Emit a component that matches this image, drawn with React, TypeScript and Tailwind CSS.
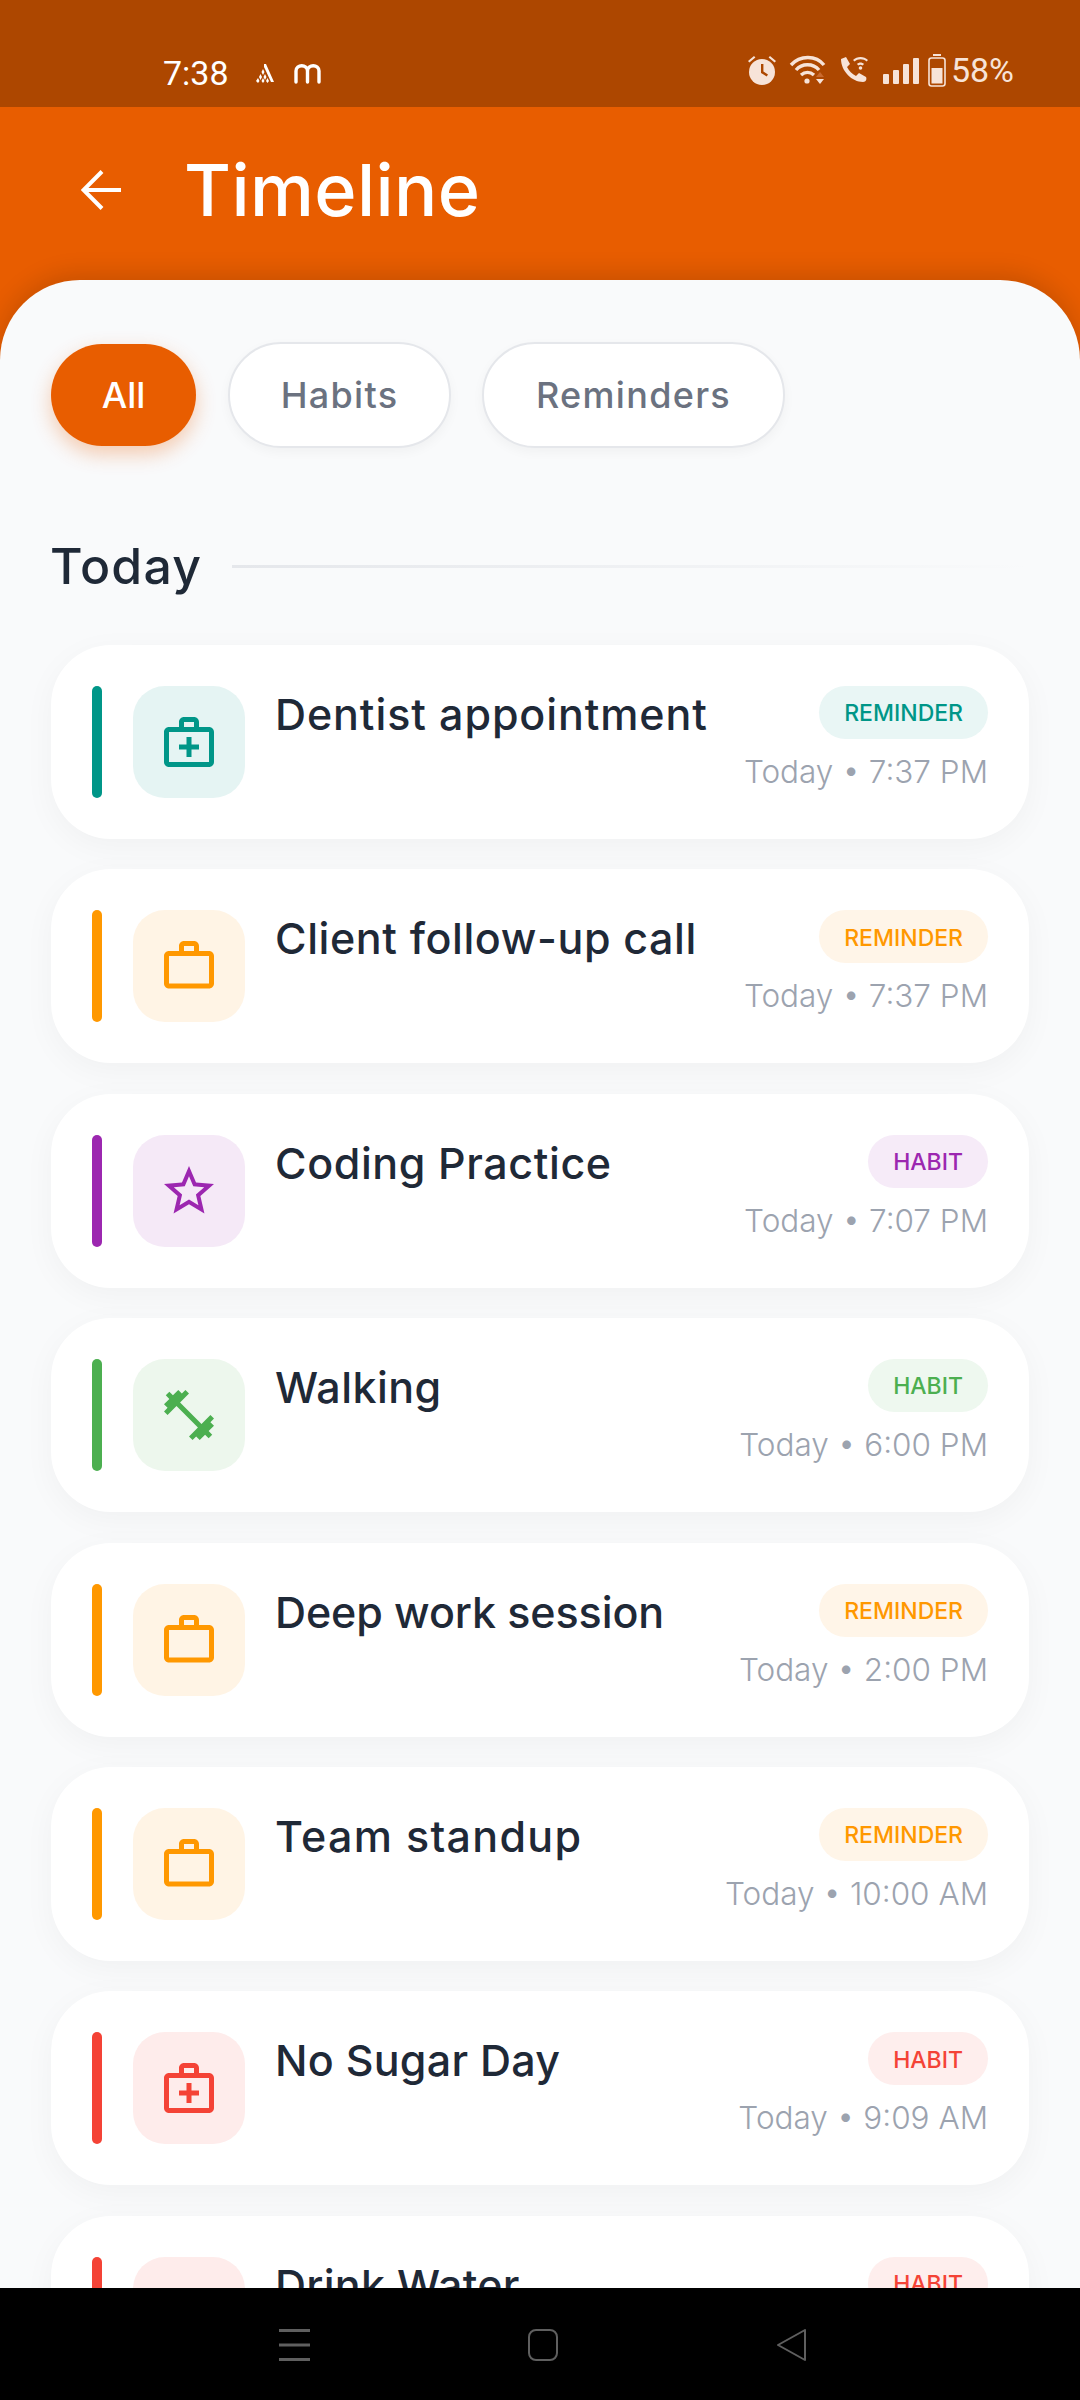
import { MdFitnessCenter, MdOutlineMedicalServices, MdStarBorder, MdWorkOutline } from 'react-icons/md'

const items = [
  { title: 'Dentist appointment', kind: 'REMINDER', time: 'Today • 7:37 PM', tone: 'teal', icon: 'med', track: 'tracking-[0.9px]' },
  { title: 'Client follow-up call', kind: 'REMINDER', time: 'Today • 7:37 PM', tone: 'orange', icon: 'work', track: 'tracking-[0.6px]' },
  { title: 'Coding Practice', kind: 'HABIT', time: 'Today • 7:07 PM', tone: 'purple', icon: 'star', track: 'tracking-[0.6px]' },
  { title: 'Walking', kind: 'HABIT', time: 'Today • 6:00 PM', tone: 'green', icon: 'fit', track: 'tracking-[0.45px]' },
  { title: 'Deep work session', kind: 'REMINDER', time: 'Today • 2:00 PM', tone: 'orange', icon: 'work', track: 'tracking-[-0.1px]' },
  { title: 'Team standup', kind: 'REMINDER', time: 'Today • 10:00 AM', tone: 'orange', icon: 'work', track: 'tracking-[1.3px]' },
  { title: 'No Sugar Day', kind: 'HABIT', time: 'Today • 9:09 AM', tone: 'red', icon: 'med', track: 'tracking-[0.25px]' },
  { title: 'Drink Water', kind: 'HABIT', time: 'Today • 8:00 AM', tone: 'red', icon: 'med', track: 'tracking-[0.25px]' },
]

const tones: Record<string, { bar: string; box: string; badge: string; text: string }> = {
  teal: { bar: 'bg-[#009688]', box: 'bg-[#e5f4f3]', badge: 'bg-[#e9f6f5]', text: 'text-[#009688]' },
  orange: { bar: 'bg-[#ff9800]', box: 'bg-[#fff4e5]', badge: 'bg-[#fff5e8]', text: 'text-[#ff9800]' },
  purple: { bar: 'bg-[#9c27b0]', box: 'bg-[#f5e9f7]', badge: 'bg-[#f6ebf8]', text: 'text-[#9c27b0]' },
  green: { bar: 'bg-[#4caf50]', box: 'bg-[#edf7ed]', badge: 'bg-[#eef8ef]', text: 'text-[#4caf50]' },
  red: { bar: 'bg-[#f44336]', box: 'bg-[#feeceb]', badge: 'bg-[#feeeed]', text: 'text-[#f44336]' },
}

function ItemIcon({ name }: { name: string }) {
  if (name === 'med') return <MdOutlineMedicalServices size={60} />
  if (name === 'work') return <MdWorkOutline size={60} />
  if (name === 'star') return <MdStarBorder size={60} />
  return <MdFitnessCenter size={60} />
}

function StatusIcons() {
  return (
    <div className="flex items-center text-[#f7e3d8]">
      <svg width="30" height="32" viewBox="0 0 30 32" fill="currentColor">
        <circle cx="15" cy="18" r="13" />
        <path d="M14 10h2.400v7.600l4.600 3-1.300 1.800L14 19z" fill="#ad4700" />
        <path d="M1 7l6-5 1.400 1.600-6 5zM29 7l-6-5-1.400 1.600 6 5z" />
      </svg>
      <svg className="ml-[12px]" width="38" height="30" viewBox="0 0 38 30" fill="none" stroke="currentColor" strokeWidth="3.400">
        <path d="M2 10C11 0 27 0 35 10" />
        <path d="M7 15c6-7 17-7 23 0" />
        <path d="M12 20c4-3.500 9-3.500 13 0" />
        <circle cx="18" cy="26" r="2.600" fill="currentColor" stroke="none" />
        <path d="M31 17l4 5h-8z" fill="#c96a2e" stroke="none" />
        <path d="M27 24h8l-4 5z" fill="currentColor" stroke="none" />
      </svg>
      <svg className="ml-[12px]" width="30" height="30" viewBox="0 0 30 30" fill="currentColor">
        <path d="M2 4l5-2 4 7-3 3c2 4 5 7 9 9l3-3 7 4c1 2 0 5-3 5C13 27 2 16 2 4z" />
        <path d="M14 5c4-4 11-4 15 0l-1.400 1.400c-3-3-9-3-12 0zM18 9c2-2 5-2 7 0l-1.400 1.400c-1.500-1-3-1-4.200 0z" />
        <circle cx="21.500" cy="13" r="1.800" />
      </svg>
      <div className="ml-[14px] flex items-end gap-[4px] h-[27px]">
        <div className="w-[6px] h-[10px] bg-current rounded-[1px]" />
        <div className="w-[6px] h-[14px] bg-current rounded-[1px]" />
        <div className="w-[6px] h-[20px] bg-current rounded-[1px]" />
        <div className="w-[6px] h-[26px] bg-current rounded-[1px]" />
      </div>
      <svg className="ml-[9px]" width="18" height="33" viewBox="0 0 18 33" fill="currentColor">
        <rect x="5" y="0" width="8" height="2" />
        <rect x="1" y="4" width="16" height="28" rx="2.500" fill="none" stroke="currentColor" strokeWidth="1.600" />
        <rect x="3.500" y="14" width="11" height="15.500" />
      </svg>
      <span className="ml-[5px] text-[34px] leading-none font-['Roboto',sans-serif]">58%</span>
    </div>
  )
}

export default function App() {
  return (
    <div className="h-[2400px] w-[1080px] flex flex-col overflow-hidden font-['Inter',sans-serif]">
      {/* Status bar */}
      <div className="h-[107px] bg-[#ad4700] flex items-start justify-between pt-[54px] pl-[163px] pr-[66px] shrink-0">
        <div className="flex items-center text-white">
          <span className="text-[34px] leading-[38px] font-['Roboto',sans-serif]">7:38</span>
          <svg className="ml-[26px]" width="20" height="20" viewBox="0 0 20 20" fill="currentColor">
            <path d="M9 1h2l8 18h-3L10 6 9 4z" />
            <path d="M8 6l1.500 3-1.500 3-1.500-3zM5.500 11l1.500 3-1.500 3-1.500-3zM10 11l1.500 3-1.500 3-1.500-3zM3 15l1.500 3-1.500 2-2-2zM8 15l1.500 3L8 20l-1.500-2zM12.500 15l1.500 3-1.500 2-1.500-2z" />
          </svg>
          <svg className="ml-[19px]" width="27" height="21" viewBox="0 0 27 21" fill="none" stroke="currentColor" strokeWidth="3.400" strokeLinecap="round">
            <path d="M2 19V8c0-7 11.500-7 11.500 0v11M13.500 8c0-7 11.500-7 11.500 0v11" />
          </svg>
        </div>
        <div className="-mt-[1px]">
          <StatusIcons />
        </div>
      </div>

      <div className="flex-1 flex flex-col bg-[#e85d00] min-h-0">
        {/* Header */}
        <div className="h-[173px] shrink-0 flex items-center pl-[81px] pb-[8px] text-white">
          <svg width="40" height="40" viewBox="0 0 40 40" fill="none" stroke="currentColor" strokeWidth="4">
            <path d="M40 20H3M21 1.500L2.500 20 21 38.500" />
          </svg>
          <h1 className="ml-[63px] text-[72px] leading-none font-medium tracking-[0.4px]">Timeline</h1>
        </div>

        {/* Sheet */}
        <div className="flex-1 min-h-0 overflow-hidden bg-[#f9fafb] rounded-t-[80px] shadow-[0_-6px_24px_rgba(0,0,0,0.14)] px-[51px] pt-[62px]">
          <div className="flex items-center">
            <button className="w-[145px] h-[102px] rounded-[51px] bg-[#e85d00] text-white text-[36px] font-medium shadow-[0_8px_20px_rgba(232,93,0,0.3)]">
              All
            </button>
            <button className="ml-[32px] w-[223px] h-[106px] rounded-[53px] bg-white border-2 border-[#e5e7eb] text-[#6b7280] text-[36px] font-medium tracking-[1.3px] shadow-[0_4px_12px_rgba(0,0,0,0.04)]">
              Habits
            </button>
            <button className="ml-[31px] w-[303px] h-[106px] rounded-[53px] bg-white border-2 border-[#e5e7eb] text-[#6b7280] text-[36px] font-medium tracking-[1.3px] shadow-[0_4px_12px_rgba(0,0,0,0.04)]">
              Reminders
            </button>
          </div>

          <div className="flex items-center mt-[83px] h-[70px]">
            <h2 className="-ml-[1px] text-[50px] leading-none font-medium text-[#1f2937] tracking-[1.2px]">Today</h2>
            <div className="ml-[30px] flex-1 h-[3px] bg-gradient-to-r from-[#e5e7eb] to-transparent" />
          </div>

          <div className="mt-[44px] flex flex-col gap-[30.4px]">
            {items.map((item) => {
              const tone = tones[item.tone]
              return (
                <div
                  key={item.title}
                  className="h-[194px] shrink-0 bg-white rounded-[60px] shadow-[0_8px_32px_rgba(0,0,0,0.04)] flex items-start pt-[41px] pl-[41px] pr-[41px]"
                >
                  <div className={`w-[10px] h-[112px] rounded-full ${tone.bar}`} />
                  <div className={`ml-[31px] w-[112px] h-[112px] rounded-[32px] flex items-center justify-center ${tone.box} ${tone.text}`}>
                    <ItemIcon name={item.icon} />
                  </div>
                  <div className={`ml-[30px] flex-1 pt-[1px] text-[43px] leading-[54px] font-medium text-[#1f2937] ${item.track}`}>
                    {item.title}
                  </div>
                  <div className="flex flex-col items-end">
                    <div className={`h-[53px] px-[25px] pt-[2px] rounded-full flex items-center text-[23px] font-medium ${tone.badge} ${tone.text}`}>
                      {item.kind}
                    </div>
                    <div className="mt-[13px] text-[31.5px] leading-[40px] font-light text-[#9ca3af]">{item.time}</div>
                  </div>
                </div>
              )
            })}
          </div>
        </div>
      </div>

      {/* Nav bar */}
      <div className="h-[112px] bg-black shrink-0 flex items-center justify-center text-[#5f5f5f]">
        <div className="flex items-center gap-[218px] ml-[5px] pt-[1px]">
          <svg width="31" height="32" viewBox="0 0 31 32" fill="currentColor">
            <rect x="0" y="0" width="31" height="3" />
            <rect x="0" y="14.500" width="31" height="3" />
            <rect x="0" y="29" width="31" height="3" />
          </svg>
          <svg width="30" height="32" viewBox="0 0 30 32" fill="none" stroke="currentColor" strokeWidth="2">
            <rect x="1" y="1" width="28" height="30" rx="7" />
          </svg>
          <svg width="31" height="32" viewBox="0 0 31 32" fill="none" stroke="currentColor" strokeWidth="2" strokeLinejoin="round">
            <path d="M29 1v30L2 16z" />
          </svg>
        </div>
      </div>
    </div>
  )
}
